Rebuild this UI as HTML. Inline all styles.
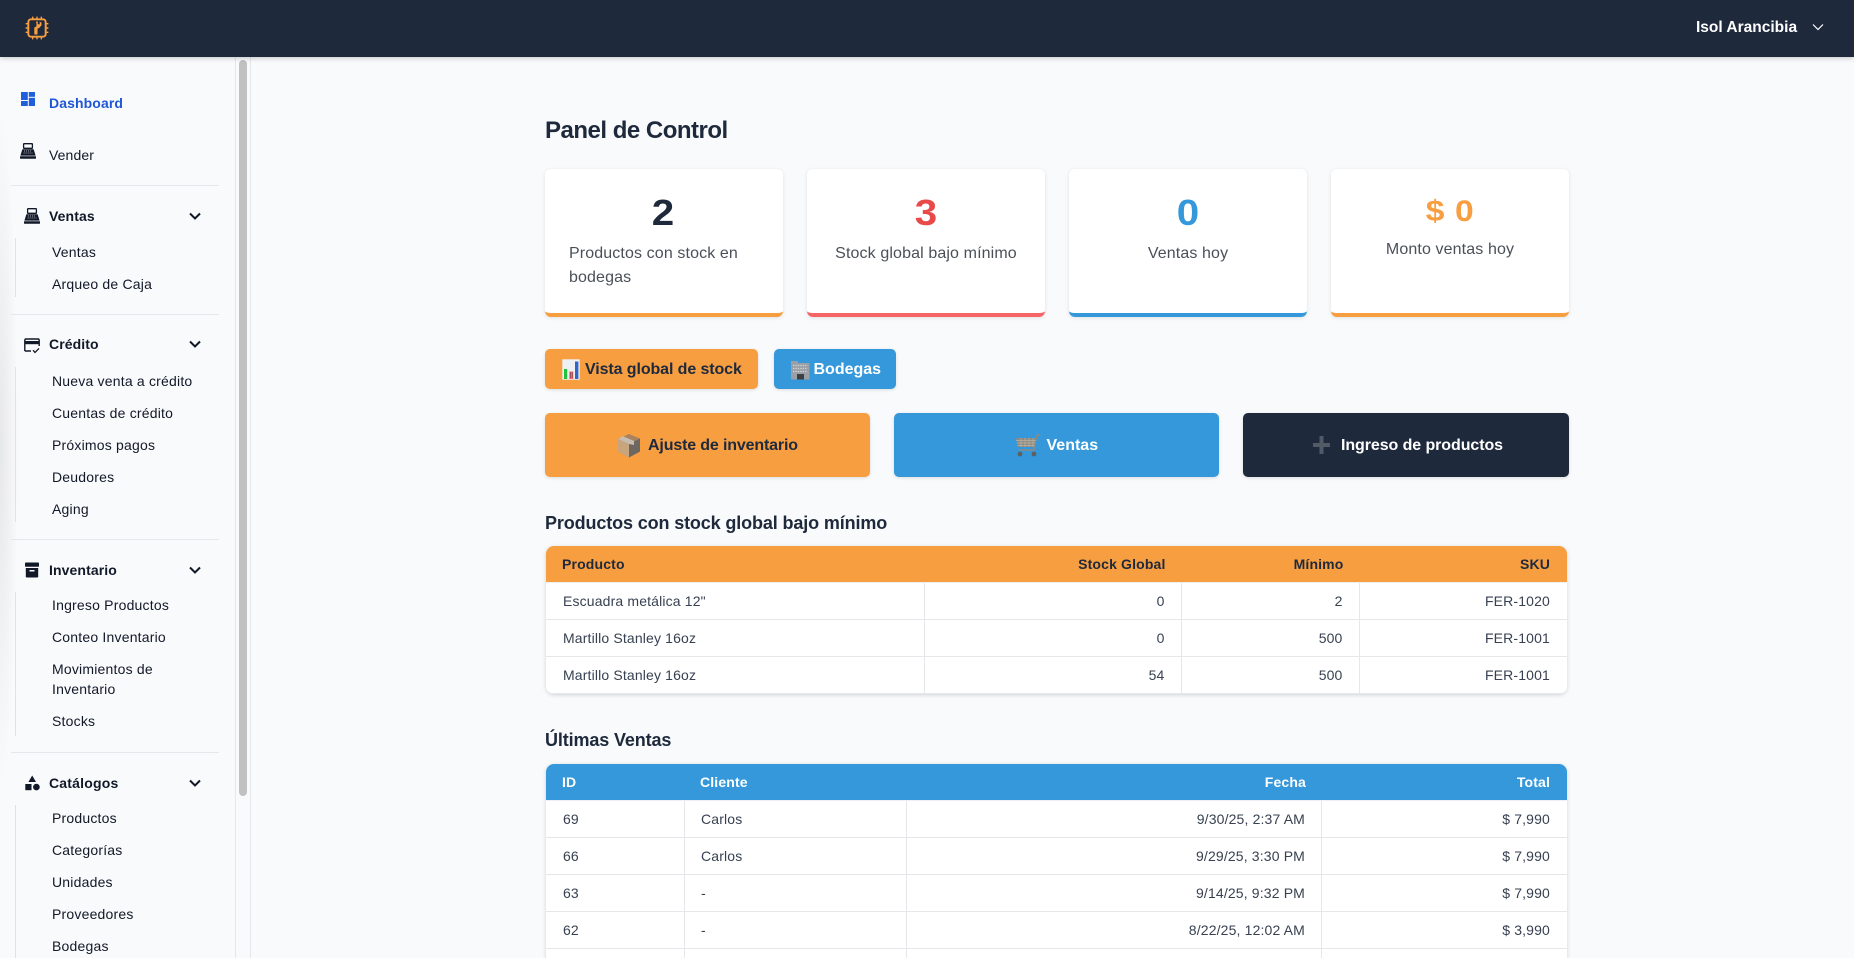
<!DOCTYPE html>
<html lang="es">
<head>
<meta charset="utf-8">
<title>Panel de Control</title>
<style>
*{box-sizing:border-box}
html,body{margin:0;padding:0;width:1854px;height:958px;overflow:hidden;background:#f8fafc;font-family:"Liberation Sans",Arial,sans-serif;color:#1e293b}
#root{position:relative;width:1854px;height:958px;overflow:hidden}
.a{position:absolute}
.t{position:absolute;white-space:nowrap;line-height:20px}
header{position:absolute;left:0;top:0;width:1854px;height:57px;background:#1e293b;box-shadow:0 1px 5px rgba(0,0,0,.22);z-index:5}
.side{position:absolute;left:0;top:57px;width:235px;height:901px;background:#f9fafc}
.s{font-size:14px;color:#111827;letter-spacing:.1px;left:49px}
.si{font-size:14px;color:#111827;letter-spacing:.2px;left:52px}
.g{font-size:14px;font-weight:700;color:#111827;left:49px;letter-spacing:.1px}
.div{position:absolute;left:11px;width:208px;height:1px;background:#e5e7eb}
.sub{position:absolute;left:15px;width:1px;background:#dfe2e7}
.card{position:absolute;top:169px;width:238px;height:148px;background:#fff;border-radius:6px;box-shadow:0 1px 4px rgba(0,0,0,.1);border-bottom:4px solid;overflow:hidden}
.lab{position:absolute;left:24px;right:24px;font-size:16px;line-height:24px;color:#4b5058;letter-spacing:.12px;text-align:center}
.num{position:absolute;left:0;right:0;text-align:center;font-weight:700;font-size:36px;line-height:40px;transform:scaleX(1.12)}
.btn{position:absolute;border-radius:5px;box-shadow:0 1px 3px rgba(0,0,0,.12)}
.bt{position:absolute;white-space:nowrap;font-size:16px;font-weight:700;line-height:20px;letter-spacing:-.1px}
h1,h2{margin:0;position:absolute;white-space:nowrap;font-weight:700;color:#1e293b}
.tw{position:absolute;left:546px;width:1021px;border-radius:8px;box-shadow:0 1px 4px rgba(0,0,0,.16);background:#fff;overflow:hidden}
table{border-collapse:separate;border-spacing:0;table-layout:fixed;width:1021px;font-size:14px}
th,td{height:37px;padding:0 16px;border-bottom:1px solid #e5e7eb;border-right:1px solid #e5e7eb;text-align:left;white-space:nowrap;letter-spacing:.15px}
th{font-weight:700;border-right:0;border-bottom:1px solid #edf0f4}
td{color:#374151}
td:first-child{padding-left:17px}
td:last-child{border-right:0;padding-right:17px}
th:last-child{padding-right:17px}
.b th:nth-child(2){padding-left:15px}
.r{text-align:right}
.o th{background:#f79e41;color:#1e293b}
.b th{background:#3498db;color:#fff}
</style>
</head>
<body>
<div id="root">
<div class="a" style="left:251px;top:57px;width:1603px;height:901px;background:#f8fafc"></div>

<header>
<svg class="a" style="left:24px;top:15px" width="26" height="26" viewBox="0 0 24 24" fill="none" stroke="#f79e41">
<rect x="4" y="4" width="16" height="16" rx="2.5" stroke-width="1.8"/>
<path d="M8 1.5V4M12 1.5V4M16 1.5V4M8 20V22.5M12 20V22.5M16 20V22.5M1.5 8H4M1.5 12H4M1.5 16H4M20 8H22.5M20 12H22.5M20 16H22.5" stroke-width="1.3"/>
<path d="M9.5 18V11.5L11.5 10.5V8L11 6H12.7V8.5H14.5V6L16.2 7.2V9.5L14 12L12.5 12.5V18Z" fill="#f79e41" stroke="none"/>
</svg>
<span class="t" style="left:1696px;top:18px;font-size:15.5px;font-weight:700;color:#fff">Isol Arancibia</span>
<svg class="a" style="left:1812px;top:22px" width="12" height="10" viewBox="0 0 12 10" fill="none" stroke="#fff" stroke-width="1.2"><path d="M1 2.5L6 7.5L11 2.5"/></svg>
</header>

<div class="side"></div>
<div class="a" style="left:0;top:90px;width:18px;height:720px;background:radial-gradient(ellipse 18px 340px at 0 360px,rgba(0,0,0,.075),rgba(0,0,0,0))"></div>
<div class="a" style="left:235px;top:57px;width:1px;height:901px;background:#e5e7eb"></div>
<div class="a" style="left:250px;top:57px;width:1px;height:901px;background:#e5e7eb"></div>
<div class="a" style="left:239px;top:60px;width:8px;height:736px;background:#c1c1c1;border-radius:4px"></div>

<!-- dashboard icon -->
<svg class="a" style="left:21px;top:92px" width="14" height="14" viewBox="0 0 14 14" fill="#1f5fdc"><rect x="0" y="0" width="6.8" height="8"/><rect x="7.8" y="0" width="6.2" height="4.8"/><rect x="0" y="9" width="6.8" height="5"/><rect x="7.8" y="5.8" width="6.2" height="8.2"/></svg>
<span class="t" style="left:49px;top:93px;font-size:14px;font-weight:700;color:#1f57d6;letter-spacing:.1px">Dashboard</span>

<!-- register -->
<svg class="a" style="left:20px;top:143px" width="16" height="16" viewBox="0 0 16 16"><rect x="3.6" y=".7" width="8.8" height="4.6" rx=".6" fill="none" stroke="#111827" stroke-width="1.3"/><path d="M2.4 6.2H13.6L15.6 12.6H.4Z" fill="#111827"/><path d="M4 8h8M3.6 10h8.8" stroke="#aab0b8" stroke-width=".9" stroke-dasharray="1 1"/><rect x="0" y="13.2" width="16" height="2.6" rx=".5" fill="#111827"/></svg>
<span class="t s" style="top:145px">Vender</span>
<div class="div" style="top:185px"></div>

<svg class="a" style="left:24px;top:208px" width="16" height="16" viewBox="0 0 16 16"><rect x="3.6" y=".7" width="8.8" height="4.6" rx=".6" fill="none" stroke="#111827" stroke-width="1.3"/><path d="M2.4 6.2H13.6L15.6 12.6H.4Z" fill="#111827"/><path d="M4 8h8M3.6 10h8.8" stroke="#aab0b8" stroke-width=".9" stroke-dasharray="1 1"/><rect x="0" y="13.2" width="16" height="2.6" rx=".5" fill="#111827"/></svg>
<span class="t g" style="top:206px">Ventas</span>
<svg class="a" style="left:188px;top:211px" width="14" height="10" viewBox="0 0 14 10" fill="none" stroke="#111827" stroke-width="2"><path d="M2 2.5L7 7.5L12 2.5"/></svg>
<div class="sub" style="top:238px;height:59px"></div>
<span class="t si" style="top:242px">Ventas</span>
<span class="t si" style="top:274px">Arqueo de Caja</span>
<div class="div" style="top:314px"></div>

<svg class="a" style="left:24px;top:338px" width="16" height="16" viewBox="0 0 16 16"><path d="M.8 13V2.2Q.8 1 2 1H14Q15.2 1 15.2 2.2V8M.8 13H7" fill="none" stroke="#111827" stroke-width="1.4"/><rect x=".8" y="3" width="14.4" height="3.2" fill="#111827"/><path d="M9 12.2L11 14.4L15 10.4" fill="none" stroke="#111827" stroke-width="1.3"/></svg>
<span class="t g" style="top:334px">Crédito</span>
<svg class="a" style="left:188px;top:339px" width="14" height="10" viewBox="0 0 14 10" fill="none" stroke="#111827" stroke-width="2"><path d="M2 2.5L7 7.5L12 2.5"/></svg>
<div class="sub" style="top:367px;height:155px"></div>
<span class="t si" style="top:371px">Nueva venta a crédito</span>
<span class="t si" style="top:403px">Cuentas de crédito</span>
<span class="t si" style="top:435px">Próximos pagos</span>
<span class="t si" style="top:467px">Deudores</span>
<span class="t si" style="top:499px">Aging</span>
<div class="div" style="top:539px"></div>

<svg class="a" style="left:25px;top:562px" width="14" height="16" viewBox="0 0 14 16"><rect x="0" y=".5" width="14" height="4.3" rx=".8" fill="#111827"/><path d="M.8 6H13.2V14.6Q13.2 15.5 12.3 15.5H1.7Q.8 15.5 .8 14.6Z" fill="#111827"/><rect x="4.5" y="8" width="5" height="1.5" fill="#f9fafc"/></svg>
<span class="t g" style="top:560px">Inventario</span>
<svg class="a" style="left:188px;top:565px" width="14" height="10" viewBox="0 0 14 10" fill="none" stroke="#111827" stroke-width="2"><path d="M2 2.5L7 7.5L12 2.5"/></svg>
<div class="sub" style="top:592px;height:144px"></div>
<span class="t si" style="top:595px">Ingreso Productos</span>
<span class="t si" style="top:627px">Conteo Inventario</span>
<span class="t si" style="top:659px">Movimientos de</span>
<span class="t si" style="top:679px">Inventario</span>
<span class="t si" style="top:711px">Stocks</span>
<div class="div" style="top:752px"></div>

<svg class="a" style="left:25px;top:775px" width="15" height="16" viewBox="0 0 15 16" fill="#111827"><path d="M7.2 .5L11 7H3.4Z"/><rect x=".3" y="9" width="6.2" height="6.2"/><circle cx="11.4" cy="12.1" r="3.3"/></svg>
<span class="t g" style="top:773px;letter-spacing:.2px">Catálogos</span>
<svg class="a" style="left:188px;top:778px" width="14" height="10" viewBox="0 0 14 10" fill="none" stroke="#111827" stroke-width="2"><path d="M2 2.5L7 7.5L12 2.5"/></svg>
<div class="sub" style="top:805px;height:153px"></div>
<span class="t si" style="top:808px">Productos</span>
<span class="t si" style="top:840px">Categorías</span>
<span class="t si" style="top:872px">Unidades</span>
<span class="t si" style="top:904px">Proveedores</span>
<span class="t si" style="top:936px">Bodegas</span>

<!-- main -->
<h1 style="left:545px;top:116px;font-size:24px;line-height:30px;letter-spacing:-.5px">Panel de Control</h1>

<div class="card" style="left:545px;border-color:#f79e41">
  <div class="num" style="top:24px;color:#1e293b;left:-2px">2</div>
  <div class="lab" style="top:73px;text-align:left">Productos con stock en bodegas</div>
</div>
<div class="card" style="left:807px;border-color:#f56565">
  <div class="num" style="top:24px;color:#e84a4a">3</div>
  <div class="lab" style="top:73px">Stock global bajo mínimo</div>
</div>
<div class="card" style="left:1069px;border-color:#3498db">
  <div class="num" style="top:24px;color:#3498db">0</div>
  <div class="lab" style="top:73px">Ventas hoy</div>
</div>
<div class="card" style="left:1331px;border-color:#f79e41">
  <div class="num" style="top:26px;font-size:30px;line-height:34px;letter-spacing:.5px;color:#f79e41">$ 0</div>
  <div class="lab" style="top:69px">Monto ventas hoy</div>
</div>

<!-- small buttons -->
<div class="btn" style="left:545px;top:349px;width:213px;height:40px;background:#f79e41"></div>
<svg class="a" style="left:562px;top:359px" width="18" height="21" viewBox="0 0 18 21"><rect x=".3" y=".3" width="17.4" height="20.4" fill="#eef1f4"/><rect x="2" y="10" width="3.2" height="10" fill="#22c33c"/><rect x="7.3" y="12.5" width="4" height="7.5" fill="#ee6b72"/><path d="M8 14h3M8 16h3M8 18h3" stroke="#222" stroke-width=".8" stroke-dasharray="1 .8"/><rect x="13" y="2.5" width="3.4" height="17.5" fill="#2f66c8"/></svg>
<span class="bt" style="left:585px;top:360px;color:#1e293b">Vista global de stock</span>

<div class="btn" style="left:774px;top:349px;width:122px;height:40px;background:#3498db"></div>
<svg class="a" style="left:790px;top:359px" width="20" height="21" viewBox="0 0 20 21"><path d="M1 2H8V4H19.5V20.5H1Z" fill="#9aa0a6"/><path d="M3 6.5H17.5M3 9.5H17.5M3 12.5H17.5" stroke="#cfd3d6" stroke-width="1.2" stroke-dasharray="1.4 1"/><rect x="7" y="15" width="7" height="5.5" fill="#3c4043"/></svg>
<span class="bt" style="left:813.5px;top:360px;color:#fff;letter-spacing:0">Bodegas</span>

<!-- large buttons -->
<div class="btn" style="left:545px;top:413px;width:325px;height:64px;background:#f79e41"></div>
<svg class="a" style="left:617px;top:433px" width="24" height="25" viewBox="0 0 24 25"><path d="M12 1L23 5.5V18.5L12 24.5L1 18.5V6Z" fill="#a9835f"/><path d="M1 6L12 11V24.5L1 18.5Z" fill="#c9a57e"/><path d="M12 11L23 5.5V18.5L12 24.5Z" fill="#6d6760"/><path d="M6 3.2L17 8V12L12 11L1 6Z" fill="#c6bcb0"/></svg>
<span class="bt" style="left:648px;top:436px;color:#1e293b;letter-spacing:-.15px">Ajuste de inventario</span>

<div class="btn" style="left:894px;top:413px;width:325px;height:64px;background:#3498db"></div>
<svg class="a" style="left:1014px;top:433px" width="27" height="25" viewBox="0 0 27 25" fill="none"><path d="M26 1L22.5 3L20 17H5" stroke="#8a8a86" stroke-width="1.6"/><path d="M2 5H22L20.5 14H4Z" fill="#8f8a80"/><path d="M2 7.5H22M3 10H21M3.5 12.5H20.5M7 5V14M11 5V14M15 5V14M19 5V14" stroke="#b7b2a6" stroke-width=".7"/><circle cx="6" cy="21" r="2.4" fill="#5f5f5f"/><circle cx="20" cy="21" r="2.4" fill="#5f5f5f"/></svg>
<span class="bt" style="left:1046.5px;top:436px;color:#fff;letter-spacing:0">Ventas</span>

<div class="btn" style="left:1243px;top:413px;width:326px;height:64px;background:#1e293b"></div>
<svg class="a" style="left:1312px;top:436px" width="19" height="18" viewBox="0 0 19 18" fill="#515a66"><rect x="7.5" y="0" width="4" height="18"/><rect x="1" y="7" width="17" height="4"/></svg>
<span class="bt" style="left:1341px;top:436px;color:#fff;letter-spacing:-.08px">Ingreso de productos</span>

<h2 style="left:545px;top:512px;font-size:18px;line-height:22px;letter-spacing:-.13px">Productos con stock global bajo mínimo</h2>
<div class="tw o" style="top:546px;height:148px">
<table>
<colgroup><col style="width:378.5px"><col style="width:257px"><col style="width:178px"><col style="width:207.5px"></colgroup>
<thead><tr><th>Producto</th><th class="r">Stock Global</th><th class="r">Mínimo</th><th class="r">SKU</th></tr></thead>
<tbody>
<tr><td>Escuadra metálica 12"</td><td class="r">0</td><td class="r">2</td><td class="r">FER-1020</td></tr>
<tr><td>Martillo Stanley 16oz</td><td class="r">0</td><td class="r">500</td><td class="r">FER-1001</td></tr>
<tr><td>Martillo Stanley 16oz</td><td class="r">54</td><td class="r">500</td><td class="r">FER-1001</td></tr>
</tbody>
</table>
</div>

<h2 style="left:545px;top:729px;font-size:18px;line-height:22px;letter-spacing:-.13px">Últimas Ventas</h2>
<div class="tw b" style="top:764px;height:206px">
<table>
<colgroup><col style="width:139px"><col style="width:222px"><col style="width:415px"><col style="width:245px"></colgroup>
<thead><tr><th>ID</th><th>Cliente</th><th class="r">Fecha</th><th class="r">Total</th></tr></thead>
<tbody>
<tr><td>69</td><td>Carlos</td><td class="r">9/30/25, 2:37 AM</td><td class="r">$ 7,990</td></tr>
<tr><td>66</td><td>Carlos</td><td class="r">9/29/25, 3:30 PM</td><td class="r">$ 7,990</td></tr>
<tr><td>63</td><td>-</td><td class="r">9/14/25, 9:32 PM</td><td class="r">$ 7,990</td></tr>
<tr><td>62</td><td>-</td><td class="r">8/22/25, 12:02 AM</td><td class="r">$ 3,990</td></tr>
<tr><td></td><td></td><td></td><td></td></tr>
</tbody>
</table>
</div>
</div>
</body>
</html>
